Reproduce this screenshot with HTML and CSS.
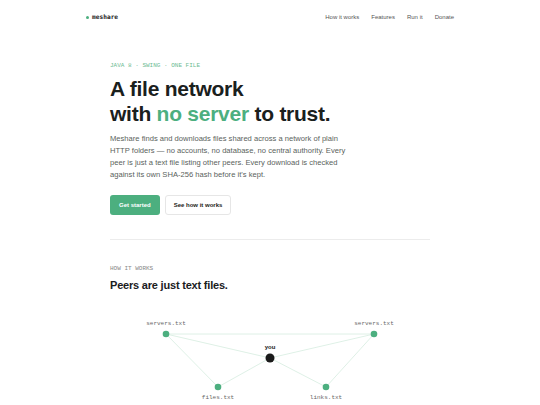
FILE: index.html
```html
<!DOCTYPE html>
<html lang="en">
<head>
<meta charset="utf-8">
<title>meshare</title>
<link rel="stylesheet" href="styles.css">
</head>
<body>
<header class="nav">
  <div class="brand"><span class="brand-dot"></span><span class="brand-name">meshare</span></div>
  <nav class="links">
    <a href="#">How it works</a>
    <a href="#">Features</a>
    <a href="#">Run it</a>
    <a href="#">Donate</a>
  </nav>
</header>
<main class="wrap">
  <section class="hero">
    <div class="eyebrow">JAVA 8 · SWING · ONE FILE</div>
    <h1 class="title">A file network<br>with <span class="accent">no server</span> to trust.</h1>
    <p class="lead">Meshare finds and downloads files shared across a network of plain HTTP folders — no accounts, no database, no central authority. Every peer is just a text file listing other peers. Every download is checked against its own SHA-256 hash before it's kept.</p>
    <div class="actions">
      <a class="btn btn-primary" href="#">Get started</a>
      <a class="btn btn-ghost" href="#">See how it works</a>
    </div>
  </section>
  <section class="how">
    <div class="kicker">HOW IT WORKS</div>
    <h2 class="subtitle">Peers are just text files.</h2>
    <svg class="diagram" width="320" height="105" viewBox="0 0 320 105">
      <g class="edges">
        <line x1="56" y1="34" x2="264" y2="34"/>
        <line x1="56" y1="34" x2="160" y2="58"/>
        <line x1="264" y1="34" x2="160" y2="58"/>
        <line x1="56" y1="34" x2="108" y2="87"/>
        <line x1="108" y1="87" x2="160" y2="58"/>
        <line x1="160" y1="58" x2="216" y2="87"/>
        <line x1="216" y1="87" x2="264" y2="34"/>
      </g>
      <g class="nodes">
        <circle cx="56" cy="34" r="3.3"/>
        <circle cx="264" cy="34" r="3.3"/>
        <circle cx="108" cy="87" r="3.3"/>
        <circle cx="216" cy="87" r="3.3"/>
      </g>
      <circle class="me" cx="160" cy="58" r="4.5"/>
      <g class="labels">
        <text x="56" y="25">servers.txt</text>
        <text x="264" y="25">servers.txt</text>
        <text x="108" y="99">files.txt</text>
        <text x="216" y="99">links.txt</text>
      </g>
      <text class="me-label" x="160" y="49">you</text>
    </svg>
  </section>
</main>
</body>
</html>
```

FILE: styles.css
```css
html, body {
  margin: 0;
  padding: 0;
  background: #ffffff;
}
body {
  font-family: "Liberation Sans", Arial, sans-serif;
  color: #1d2320;
  overflow: hidden;
}
a { text-decoration: none; color: inherit; }

.nav {
  width: 368px;
  margin: 0 auto;
  padding: 12px 0;
  display: flex;
  align-items: center;
  justify-content: space-between;
  line-height: 10px;
}
.brand {
  display: flex;
  align-items: center;
  gap: 3px;
}
.brand-dot {
  width: 3px;
  height: 3px;
  border-radius: 50%;
  background: #4caf7f;
}
.brand-name {
  font-family: "DejaVu Sans Mono", "Liberation Mono", monospace;
  font-weight: bold;
  font-size: 6.2px;
  color: #222;
}
.links {
  display: flex;
  gap: 12px;
  font-size: 6px;
  color: #555;
}

.wrap {
  width: 320px;
  margin: 0 auto;
}
.hero {
  padding-top: 28px;
  padding-bottom: 24px;
  border-bottom: 1px solid #ececec;
}
.eyebrow {
  font-family: "Liberation Mono", "DejaVu Sans Mono", monospace;
  font-size: 6px;
  line-height: 8px;
  color: #6dbb92;
}
.title {
  margin: 6px 0 0;
  font-size: 21px;
  line-height: 25.2px;
  font-weight: bold;
  letter-spacing: -0.25px;
  color: #1a201d;
}
.accent { color: #4caf7f; }
.lead {
  margin: 7px 0 0;
  max-width: 240px;
  font-size: 7.6px;
  line-height: 12px;
  color: #5a5f5c;
}
.actions {
  margin-top: 14px;
  display: flex;
  gap: 5px;
}
.btn {
  height: 20px;
  box-sizing: border-box;
  border-radius: 3px;
  display: flex;
  align-items: center;
  justify-content: center;
  white-space: nowrap;
  font-size: 6px;
  font-weight: bold;
}
.btn-primary {
  background: #4caf7f;
  color: #ffffff;
  padding: 0 9px;
}
.btn-ghost {
  background: #ffffff;
  border: 1px solid #e6e6e6;
  color: #1d2320;
  padding: 0 8px;
}

.how {
  padding-top: 25px;
}
.kicker {
  font-family: "Liberation Mono", "DejaVu Sans Mono", monospace;
  font-size: 6px;
  line-height: 8px;
  color: #888;
}
.subtitle {
  margin: 5px 0 0;
  font-size: 11px;
  line-height: 14px;
  font-weight: bold;
  letter-spacing: -0.2px;
  color: #1a201d;
}
.diagram {
  display: block;
  margin-top: 8px;
}
.edges line {
  stroke: #d6ece0;
  stroke-width: 0.8;
}
.nodes circle { fill: #4caf7f; }
.me { fill: #1a1a1a; }
.labels text {
  font-family: "Liberation Mono", "DejaVu Sans Mono", monospace;
  font-size: 6px;
  fill: #666;
  text-anchor: middle;
}
.me-label {
  font-family: "Liberation Sans", Arial, sans-serif;
  font-size: 6px;
  font-weight: bold;
  fill: #222;
  text-anchor: middle;
}
```
